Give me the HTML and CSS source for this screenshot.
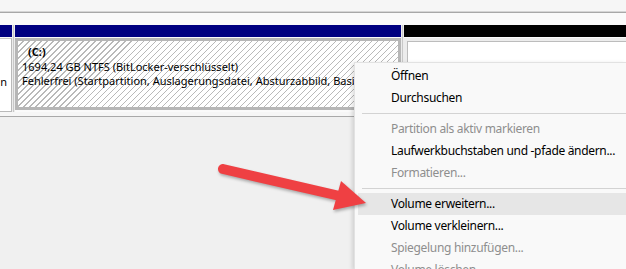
FILE: index.html
```html
<!DOCTYPE html>
<html lang="de">
<head>
<meta charset="utf-8">
<title>Datenträgerverwaltung</title>
<link rel="stylesheet" href="styles.css">
</head>
<body>
<div class="screen">
  <div class="top"></div>
  <div class="rule"></div>
  <div class="topgap"></div>
  <div class="disks">
    <div class="col col-info">
      <div class="bar bar-blue"></div>
      <div class="box box-info"><span>n</span></div>
    </div>
    <div class="sep"></div>
    <div class="col col-c">
      <div class="bar bar-blue"></div>
      <div class="box box-part">
        <div class="line lbl">(C:)</div>
        <div class="line">1694,24 GB NTFS (BitLocker-verschlüsselt)</div>
        <div class="line">Fehlerfrei (Startpartition, Auslagerungsdatei, Absturzabbild, Basisdatenpartition)</div>
      </div>
    </div>
    <div class="sep"></div>
    <div class="col col-r">
      <div class="bar bar-black"></div>
      <div class="box box-free"><div class="free-inner"></div></div>
    </div>
  </div>
  <div class="below"></div>
  <div class="rest"></div>
</div>

<div class="menu">
  <div class="item">Öffnen</div>
  <div class="item">Durchsuchen</div>
  <div class="msep"></div>
  <div class="item off">Partition als aktiv markieren</div>
  <div class="item">Laufwerkbuchstaben und -pfade ändern...</div>
  <div class="item off">Formatieren...</div>
  <div class="msep"></div>
  <div class="item hot">Volume erweitern...</div>
  <div class="item">Volume verkleinern...</div>
  <div class="item off">Spiegelung hinzufügen...</div>
  <div class="item off">Volume löschen...</div>
</div>

<svg class="arrow" width="626" height="269" viewBox="0 0 626 269" aria-hidden="true">
  <line x1="223" y1="169" x2="342" y2="196.5" stroke="#ef4043" stroke-width="10" stroke-linecap="round"/>
  <polygon points="341,181 366,203 333,210" fill="#ef4043"/>
</svg>
</body>
</html>
```

FILE: styles.css
```css
* { box-sizing: border-box; }
html, body { margin: 0; padding: 0; }
body {
  width: 626px;
  height: 269px;
  overflow: hidden;
  background: #f0f0f0;
  font-family: "Noto Sans", "Open Sans", sans-serif;
  font-size: 12px;
  color: #000;
  position: relative;
}
.screen { display: flex; flex-direction: column; height: 269px; }
.top { height: 12px; background: #f6f6f6; border-bottom: 1px solid #d6d6d6; flex: none; }
.rule { height: 1px; background: #a8a8a8; flex: none; }
.topgap { height: 12px; background: #fafafa; flex: none; }
.disks { display: flex; height: 87px; flex: none; background: #fafafa; }
.col { display: flex; flex-direction: column; gap: 1px; }
.col-info { width: 12px; }
.col-c { width: 386px; }
.col-r { flex: 1; }
.sep {
  width: 3px;
  background: linear-gradient(to right, #ececec 0 1px, #c8c8c8 1px 2px, #ececec 2px);
}
.bar { height: 12px; flex: none; }
.bar-blue { background: #000080; }
.bar-black { background: #000; }
.box { flex: 1; overflow: hidden; }
.box-info {
  background: #fff;
  border-top: 1px solid #c6c6c6;
  border-right: 1px solid #b9b9b9;
  border-bottom: 1px solid #b9b9b9;
  display: flex;
  justify-content: flex-end;
  padding: 36px 4px 0 0;
  white-space: nowrap;
  line-height: 14px;
  font-size: 11px;
}
.box-part {
  flex: none;
  height: 72px;
  border: 3px solid #b6b6b6;
  background: repeating-linear-gradient(135deg, #ffffff 0 3.4px, #b9b9b9 3.4px 4.25px);
  padding: 4px 0 0 4px;
  font-size: 11px;
}
.line { white-space: nowrap; line-height: 14.5px; height: 14.5px; }
.lbl { font-weight: bold; padding-left: 6px; }
.box-free { padding: 3px 0 0 3px; background: #ececec; }
.free-inner { height: 100%; background: #fff; border-top: 1px solid #bcbcbc; border-left: 1px solid #bcbcbc; }
.below { height: 5px; background: #f6f6f6; border-bottom: 1px solid #a9a9a9; flex: none; }
.rest { flex: 1; background: #f0f0f0; }

.menu {
  position: absolute;
  left: 354px;
  top: 62px;
  width: 272px;
  height: 207px;
  overflow: hidden;
  background: #f9f9f9;
  border: 1px solid #e2e2e2;
  border-right: 0;
  border-bottom: 0;
  padding: 2px 0 0 3px;
  box-shadow: -2px 1px 4px rgba(0, 0, 0, 0.13);
}
.item {
  height: 22px;
  line-height: 22px;
  padding-left: 33px;
  white-space: nowrap;
  color: #000;
  letter-spacing: -0.32px;
}
.item.off { color: #8e8e8e; }
.item.hot { background: #e6e6e6; }
.msep {
  height: 9px;
  margin-left: 4px;
  background: linear-gradient(#d3d3d3, #d3d3d3) no-repeat 0 4px / 100% 1px;
}
.arrow {
  position: absolute;
  left: 0;
  top: 0;
  pointer-events: none;
  filter: drop-shadow(1px 2px 1.5px rgba(0, 0, 0, 0.3));
}
```
